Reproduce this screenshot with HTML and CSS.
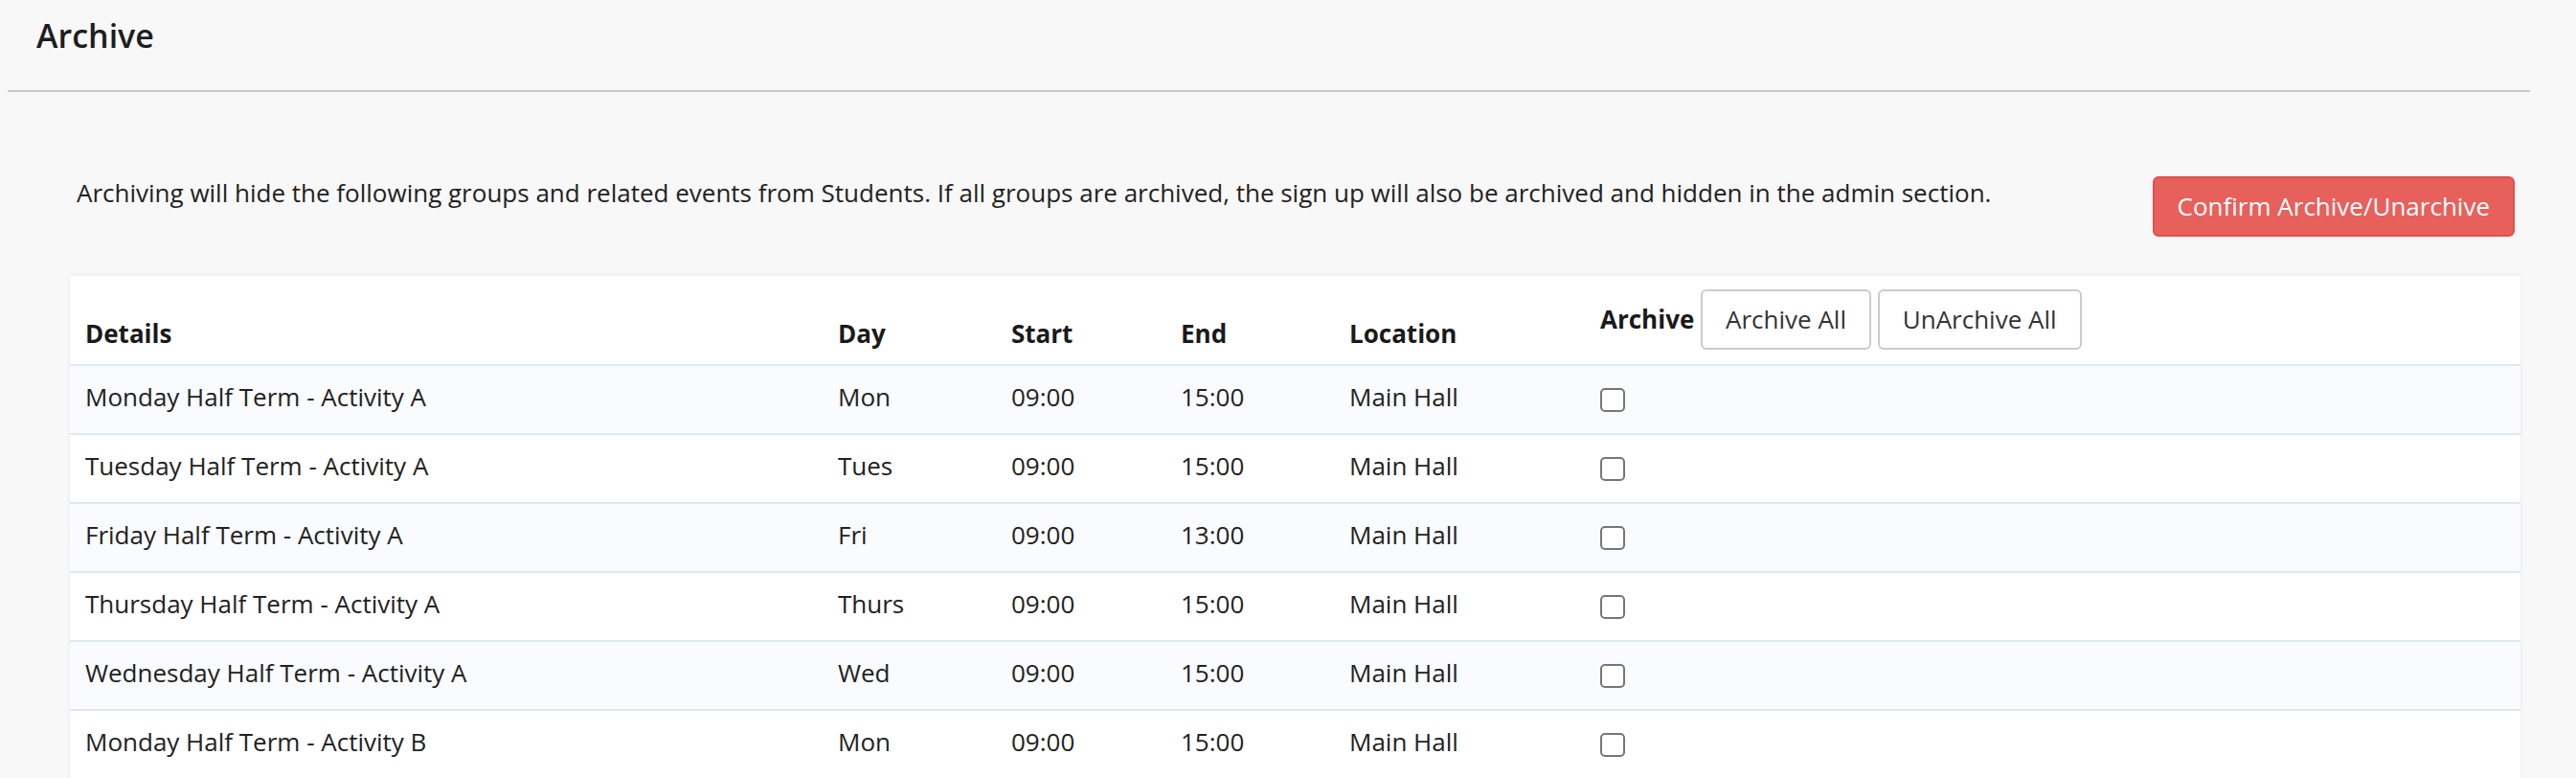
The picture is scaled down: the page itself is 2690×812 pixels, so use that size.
FILE: index.html
```html
<!DOCTYPE html>
<html lang="en">
<head>
    <meta charset="UTF-8">
    <meta name="viewport" content="width=device-width, initial-scale=1.0">
    <title>Archive</title>

    <link rel="stylesheet" href="styles.css">
</head>
<body>
    <header class="page-header">
        <h1>Archive</h1>
    </header>

    <main class="content">
        <div class="intro">
            <p>Archiving will hide the following groups and related events from Students. If all groups are archived, the sign up will also be archived and hidden in the admin section.</p>
            <button class="btn btn-danger confirm-btn">Confirm Archive/Unarchive</button>
        </div>

        <div class="card">
            <table class="groups">
                <colgroup>
                    <col class="col-details">
                    <col class="col-day">
                    <col class="col-start">
                    <col class="col-end">
                    <col class="col-location">
                    <col>
                </colgroup>
                <thead>
                    <tr>
                        <th>Details</th>
                        <th>Day</th>
                        <th>Start</th>
                        <th>End</th>
                        <th>Location</th>
                        <th class="archive-head">Archive <button class="btn">Archive All</button> <button class="btn">UnArchive All</button></th>
                    </tr>
                </thead>
                <tbody>
                    <tr>
                        <td>Monday Half Term - Activity A</td>
                        <td>Mon</td>
                        <td>09:00</td>
                        <td>15:00</td>
                        <td>Main Hall</td>
                        <td><input type="checkbox" class="archive-check"></td>
                    </tr>
                    <tr>
                        <td>Tuesday Half Term - Activity A</td>
                        <td>Tues</td>
                        <td>09:00</td>
                        <td>15:00</td>
                        <td>Main Hall</td>
                        <td><input type="checkbox" class="archive-check"></td>
                    </tr>
                    <tr>
                        <td>Friday Half Term - Activity A</td>
                        <td>Fri</td>
                        <td>09:00</td>
                        <td>13:00</td>
                        <td>Main Hall</td>
                        <td><input type="checkbox" class="archive-check"></td>
                    </tr>
                    <tr>
                        <td>Thursday Half Term - Activity A</td>
                        <td>Thurs</td>
                        <td>09:00</td>
                        <td>15:00</td>
                        <td>Main Hall</td>
                        <td><input type="checkbox" class="archive-check"></td>
                    </tr>
                    <tr>
                        <td>Wednesday Half Term - Activity A</td>
                        <td>Wed</td>
                        <td>09:00</td>
                        <td>15:00</td>
                        <td>Main Hall</td>
                        <td><input type="checkbox" class="archive-check"></td>
                    </tr>
                    <tr>
                        <td>Monday Half Term - Activity B</td>
                        <td>Mon</td>
                        <td>09:00</td>
                        <td>15:00</td>
                        <td>Main Hall</td>
                        <td><input type="checkbox" class="archive-check"></td>
                    </tr>
                </tbody>
            </table>
        </div>
    </main>
</body>
</html>
```

FILE: styles.css
```css
body{
    margin: 0;
    background-color: #f8f8f8;
    font-family: 'Open Sans', 'DejaVu Sans', sans-serif;
    font-size: 26px;
    line-height: 37px;
    color: #222;
}

.page-header{
    margin: 0 48px 0 8px;
    height: 94px;
    padding-left: 30px;
    border-bottom: 2px solid #c9c9c9;
}
.page-header h1{
    margin: 0;
    padding-top: 12px;
    font-size: 34px;
    line-height: 50px;
    font-weight: 600;
    color: #1e1e1e;
}

.content{
    padding: 0 58px 0 73px;
}
.intro{
    display: flex;
    justify-content: space-between;
    align-items: flex-start;
    padding: 0 6px 0 7px;
    margin: 87px 0 41px;
}
.intro p{
    margin: 0;
}

.btn{
    font-family: inherit;
    font-size: 26px;
    line-height: 37px;
    padding: 11px 24px;
    border: 2px solid #cccccc;
    border-radius: 6px;
    background-color: #fff;
    color: #333;
}
.btn-danger{
    background-color: #e8605c;
    border-color: #e14f4b;
    color: #fff;
}
.confirm-btn{
    margin-top: 1px;
    flex-shrink: 0;
}

.card{
    background-color: #fff;
    box-shadow: 0 0 4px rgba(0, 0, 0, 0.07);
}

.groups{
    width: 100%;
    border-collapse: collapse;
    table-layout: fixed;
}
.col-details{ width: 786px; }
.col-day{ width: 181px; }
.col-start{ width: 177px; }
.col-end{ width: 176px; }
.col-location{ width: 262px; }

.groups th{
    text-align: left;
    vertical-align: bottom;
    font-weight: 700;
    color: #1a1a1a;
    padding: 14px 16px 13px;
    border-bottom: 2px solid #dce8f4;
    white-space: nowrap;
}
.groups th.archive-head{
    padding-bottom: 15px;
}
.groups td{
    padding: 14px 16px 19px;
    border-bottom: 2px solid #dde8f4;
}
.groups tbody tr:nth-child(odd){
    background-color: #f9fbfe;
}

.archive-check{
    appearance: none;
    -webkit-appearance: none;
    width: 26px;
    height: 25px;
    margin: 0;
    border: 2px solid #767676;
    border-radius: 5px;
    background-color: #fff;
    vertical-align: middle;
}
```
